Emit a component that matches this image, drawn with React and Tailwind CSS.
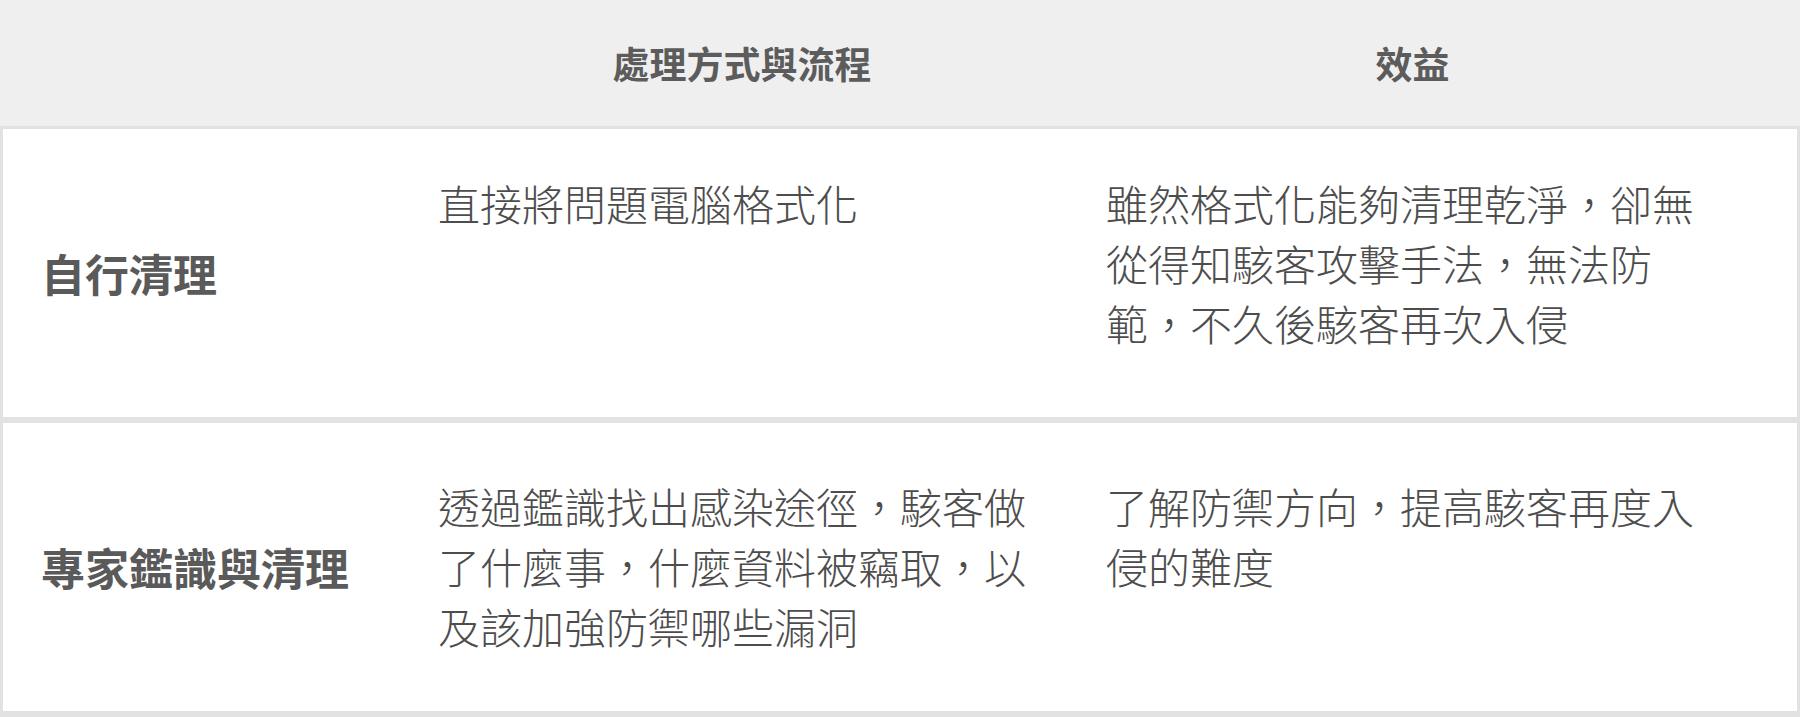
const rows = [
  {
    label: '自行清理',
    method: '直接將問題電腦格式化',
    benefit: '雖然格式化能夠清理乾淨，卻無從得知駭客攻擊手法，無法防範，不久後駭客再次入侵',
    pad: 'pt-[44px]',
  },
  {
    label: '專家鑑識與清理',
    method: '透過鑑識找出感染途徑，駭客做了什麼事，什麼資料被竊取，以及該加強防禦哪些漏洞',
    benefit: '了解防禦方向，提高駭客再度入侵的難度',
    pad: 'pt-[53px]',
  },
];

const thin = {
  fontFamily: '"Noto Sans CJK TC Light", "Noto Sans CJK TC DemiLight", "Noto Sans CJK TC", sans-serif',
};

export default function App() {
  return (
    <div
      className="w-[1800px] h-[717px] bg-white border-b-[3px] border-[#e2e2e2]"
      style={{ fontFamily: '"Noto Sans CJK TC", "Noto Sans", sans-serif' }}
    >
      <div className="h-[126px] bg-[#efefef] px-[3px] grid grid-cols-[395px_668px_1fr] items-center text-[37px] font-bold text-[#5c5c5c] leading-none">
        <div />
        <div className="pl-[40px] pr-[20px] text-center">處理方式與流程</div>
        <div className="pl-[40px] pr-[78px] text-center">效益</div>
      </div>

      {rows.map((row) => (
        <div
          key={row.label}
          className="h-[294px] border-[3px] border-[#e2e2e2] grid grid-cols-[395px_668px_1fr]"
        >
          <div className="flex items-center pl-[38px] text-[44px] font-bold text-[#5a5a5a] leading-none">
            {row.label}
          </div>
          <div
            className={`${row.pad} pl-[40px] pr-[20px] text-[42px] leading-[60px] font-light text-[#4d4d4d]`}
            style={thin}
          >
            {row.method}
          </div>
          <div
            className={`${row.pad} pl-[40px] pr-[83px] text-[42px] leading-[60px] font-light text-[#4d4d4d]`}
            style={thin}
          >
            {row.benefit}
          </div>
        </div>
      ))}
    </div>
  );
}
